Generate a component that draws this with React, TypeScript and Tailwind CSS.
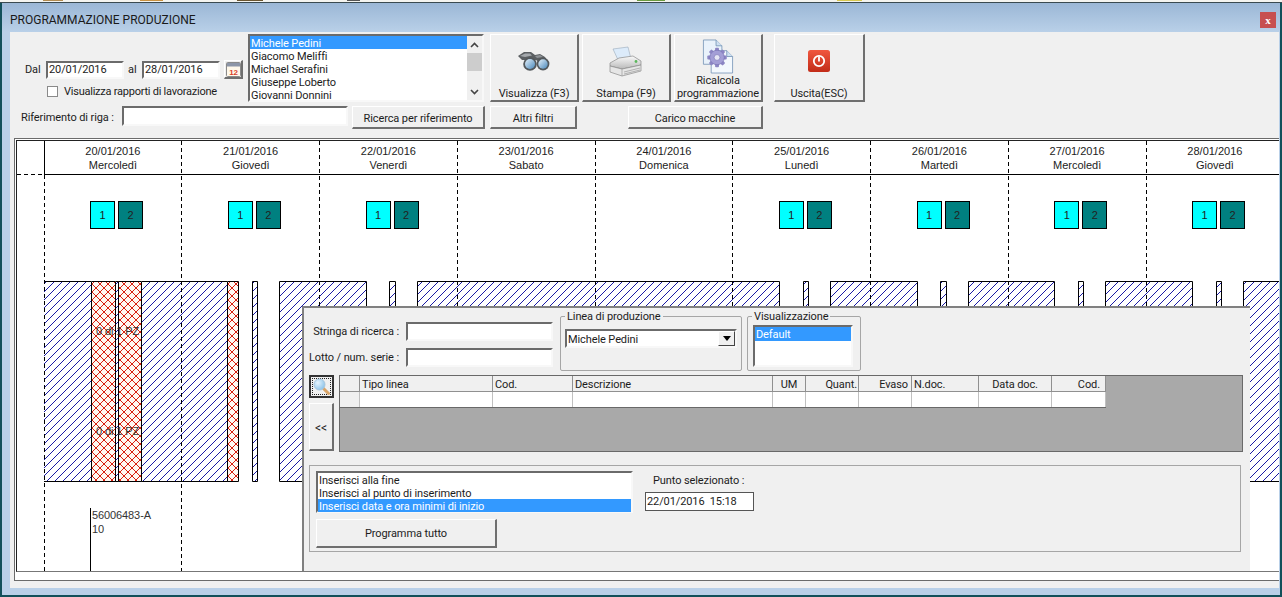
import React from "react";

const ui = "font-['Roboto',sans-serif] text-[11px] leading-[13px] tracking-[-0.1px] text-[#1c1c1c]";
const sunken = "border-2 border-t-[#6b6b6b] border-l-[#6b6b6b] border-r-[#f8f8f8] border-b-[#f8f8f8] bg-white";
const raised = "border border-t-white border-l-white border-r-2 border-b-2 border-r-[#6f6f6f] border-b-[#6f6f6f] bg-[#f0f0f0]";

const days = [
  ["20/01/2016", "Mercoledì", true],
  ["21/01/2016", "Giovedì", true],
  ["22/01/2016", "Venerdì", true],
  ["23/01/2016", "Sabato", false],
  ["24/01/2016", "Domenica", false],
  ["25/01/2016", "Lunedì", true],
  ["26/01/2016", "Martedì", true],
  ["27/01/2016", "Mercoledì", true],
  ["28/01/2016", "Giovedì", true],
] as const;

const gridX = [44, 181, 319, 457, 595, 732, 870, 1008, 1146];
const blocks: [number, number, "h" | "r"][] = [
  [44, 91, "h"], [91, 115, "r"], [115, 118, "h"], [118, 141, "r"], [141, 227, "h"], [227, 238, "r"],
  [252, 257, "h"], [279, 366, "h"], [389, 395, "h"], [417, 779, "h"], [803, 808, "h"], [830, 917, "h"],
  [940, 946, "h"], [968, 1054, "h"], [1078, 1083, "h"], [1105, 1192, "h"], [1216, 1221, "h"], [1243, 1290, "h"],
];

function Chart() {
  return (
    <svg className="absolute left-0 top-0" width={1262} height={431} viewBox="17 141 1262 431">
      <defs>
        <pattern id="hb" patternUnits="userSpaceOnUse" width="8" height="8">
          <rect width="8" height="8" fill="#ffffff" />
          <path d="M-1 9L9 -1" stroke="#00009a" strokeWidth="0.9" fill="none" />
        </pattern>
        <pattern id="hr" patternUnits="userSpaceOnUse" width="8" height="8">
          <rect width="8" height="8" fill="#fff8f2" />
          <path d="M-1 9L9 -1M-1 -1L9 9" stroke="#d8200f" strokeWidth="1" fill="none" />
        </pattern>
      </defs>
      {blocks.map(([a, b, t], i) => (
        <g key={i}>
          <rect x={a} y={281} width={b - a} height={200} fill={t === "h" ? "url(#hb)" : "url(#hr)"} />
          <path
            d={i === 0 ? `M44 281.5H${b}.5V481.5H44` : `M${a}.5 281.5H${b}.5V481.5H${a}.5Z`}
            fill="none"
            stroke="#000"
            strokeWidth="1"
          />
        </g>
      ))}
      {gridX.map((x) => (
        <line key={x} x1={x + 0.5} x2={x + 0.5} y1={x === 44 ? 175 : 141} y2={572} stroke="#000" strokeDasharray="4 3" />
      ))}
      <line x1={44.5} x2={44.5} y1={141} y2={174} stroke="#000" />
      <line x1={17} x2={44} y1={174.5} y2={174.5} stroke="#000" strokeDasharray="4 3" />
      <line x1={44} x2={1279} y1={174.5} y2={174.5} stroke="#000" />
      <line x1={90.5} x2={90.5} y1={508} y2={572} stroke="#000" />
      <g className="font-['Liberation_Sans',sans-serif] text-[11px]" fill="#333">
        <text x={96} y={335}>0 di 1 PZ</text>
        <text x={96} y={435}>0 di 1 PZ</text>
        <text x={92} y={519}>56006483-A</text>
        <text x={92} y={533}>10</text>
      </g>
    </svg>
  );
}

function Binoculars() {
  return (
    <svg width="32" height="19" viewBox="0 0 32 19">
      <defs>
        <linearGradient id="lens" x1="0" y1="0" x2="1" y2="1">
          <stop offset="0" stopColor="#e4f1fb" />
          <stop offset="1" stopColor="#4a88bb" />
        </linearGradient>
      </defs>
      <path d="M0 4L6 0H13L17 3L22 2L27 5L31 11L25 13L18 8H11L4 8Z" fill="#5b5f62" />
      <path d="M2 4L7 1.5H12L14 3.5L7 5Z" fill="#a5a9ad" />
      <path d="M17 4L22 3L25 5L19 6Z" fill="#8f9397" />
      <circle cx="12" cy="12" r="6.8" fill="#53585c" />
      <circle cx="12" cy="12" r="5" fill="url(#lens)" />
      <circle cx="25" cy="12" r="6.4" fill="#53585c" />
      <circle cx="25" cy="12" r="4.7" fill="url(#lens)" />
    </svg>
  );
}

function Printer() {
  return (
    <svg width="34" height="32" viewBox="0 0 34 32">
      <defs>
        <linearGradient id="pb" x1="0" y1="0" x2="0" y2="1">
          <stop offset="0" stopColor="#fafafa" />
          <stop offset="1" stopColor="#b9b9b9" />
        </linearGradient>
      </defs>
      <path d="M4 3L19 1L22 13L10 16Z" fill="#dcebfa" stroke="#9ab" strokeWidth=".6" />
      <path d="M1 17L10 12L24 10L32 15V19L13 23L1 20Z" fill="url(#pb)" stroke="#8a8a8a" strokeWidth=".7" />
      <path d="M1 20L13 23L32 19V25L13 30L1 26Z" fill="#e6e6e6" stroke="#8a8a8a" strokeWidth=".7" />
      <path d="M13 23V30M15 26L31 22M15 28L31 24" stroke="#9a9a9a" strokeWidth=".7" fill="none" />
      <circle cx="27" cy="15.5" r="1.4" fill="#5cb85c" />
    </svg>
  );
}

function GearDoc() {
  const teeth = [0, 45, 90, 135];
  return (
    <svg width="32" height="36" viewBox="0 0 32 36">
      <path d="M1 1H14L20 7V26H1Z" fill="#e9f2fb" stroke="#6f8fb3" strokeWidth=".8" />
      <path d="M14 1V7H20" fill="#cfe0f2" stroke="#6f8fb3" strokeWidth=".8" />
      <path d="M15 12H25L31 18V35H9V20Z" fill="#f3f8fd" stroke="#6f8fb3" strokeWidth=".8" />
      <path d="M25 12V18H31" fill="#cfe0f2" stroke="#6f8fb3" strokeWidth=".8" />
      <g transform="translate(15 19)">
        {teeth.map((r) => (
          <rect key={r} x="-2" y="-10" width="4" height="20" rx="1" fill="#8c86c4" transform={`rotate(${r})`} />
        ))}
        <circle r="7.5" fill="#a39ed6" stroke="#726cb0" strokeWidth=".6" />
        <circle r="3" fill="#e6e6f5" stroke="#726cb0" strokeWidth=".6" />
      </g>
    </svg>
  );
}

function Power() {
  return (
    <svg width="22" height="22" viewBox="0 0 22 22">
      <defs>
        <linearGradient id="pw" x1="0" y1="0" x2="0" y2="1">
          <stop offset="0" stopColor="#f0573f" />
          <stop offset="1" stopColor="#c22c18" />
        </linearGradient>
      </defs>
      <rect width="22" height="22" rx="2.5" fill="url(#pw)" />
      <circle cx="11" cy="11" r="5.2" fill="none" stroke="#fff" strokeWidth="1.8" />
      <path d="M11 6.5V11.5" stroke="#fff" strokeWidth="1.8" />
    </svg>
  );
}

function Calendar() {
  return (
    <svg width="15" height="15" viewBox="0 0 15 15">
      <rect x=".5" y=".5" width="14" height="14" rx="1" fill="#fff8ea" stroke="#8a8a8a" />
      <rect x="1" y="1" width="13" height="3.5" fill="#8d96a8" />
      <text x="7.5" y="12.5" textAnchor="middle" className="font-['Liberation_Sans',sans-serif] text-[8px] font-bold" fill="#d8402a">12</text>
    </svg>
  );
}

function Magnifier() {
  return (
    <svg width="17" height="17" viewBox="0 0 17 17">
      <defs>
        <radialGradient id="mg" cx=".35" cy=".35" r=".8">
          <stop offset="0" stopColor="#e6f4fd" />
          <stop offset="1" stopColor="#7fbce6" />
        </radialGradient>
      </defs>
      <path d="M10 10L15.5 15.5" stroke="#d8a468" strokeWidth="3" strokeLinecap="round" />
      <circle cx="6.5" cy="6.5" r="5.5" fill="url(#mg)" stroke="#a8c6dc" />
    </svg>
  );
}

function Chevron({ up }: { up?: boolean }) {
  return (
    <svg width="9" height="6" viewBox="0 0 9 6">
      <path d={up ? "M1 5L4.5 1.5L8 5" : "M1 1L4.5 4.5L8 1"} fill="none" stroke="#444" strokeWidth="1.6" />
    </svg>
  );
}

function Group({ label, className, children }: { label: string; className: string; children: React.ReactNode }) {
  return (
    <div className={`relative border border-[#a6a6a6] rounded-[2px] h-[55px] mt-[1px] ${className}`}>
      <span className="absolute left-[4px] top-[-7px] bg-[#f0f0f0] px-[2px] whitespace-nowrap">{label}</span>
      {children}
    </div>
  );
}

const cols = [
  ["", ""],
  ["Tipo linea", "pl-[2px]"],
  ["Cod.", "pl-[2px]"],
  ["Descrizione", "pl-[2px]"],
  ["UM", "text-center"],
  ["Quant.", "text-right pr-[1px]"],
  ["Evaso", "text-right pr-[3px]"],
  ["N.doc.", "pl-[2px]"],
  ["Data doc.", "text-center"],
  ["Cod.", "text-right pr-[5px]"],
];

const row = "h-[13px] leading-[15px] pl-[1px]";

export default function App() {
  return (
    <div className={`${ui} relative w-[1282px] h-[597px] overflow-hidden bg-white flex flex-col`}>
      <svg width="1282" height="3" className="block shrink-0">
        <rect width="1282" height="2" fill="#f4f4f0" />
        <rect x="43" width="20" height="1" fill="#b08a50" />
        <rect x="140" width="23" height="1" fill="#c89040" />
        <rect x="237" width="26" height="1" fill="#6a5530" />
        <rect x="347" width="13" height="1" fill="#555" />
        <rect x="637" width="28" height="1" fill="#6a9a40" />
        <rect x="837" width="25" height="1" fill="#d8c850" />
        <rect y="2" width="1282" height="1" fill="#3a4a50" />
      </svg>
      <div className="flex-1 flex flex-col border-l-2 border-r-2 border-b-2 border-[#12505a] bg-[#b9d0e8] min-h-0">
        <div className="h-[29px] shrink-0 flex items-start justify-between pt-[9px] pl-[8px] pr-[4px] bg-gradient-to-b from-[#9bb7d6] to-[#b9d0e8]">
          <span className="text-[12px] leading-[16px] tracking-normal text-[#1a1a1a]">PROGRAMMAZIONE PRODUZIONE</span>
          <div className="w-[16px] h-[16px] bg-[#c75050] flex items-center justify-center text-white font-bold text-[11px] font-['Liberation_Serif',serif]">x</div>
        </div>

        <div className="ml-[8px] w-[1269px] h-[556px] bg-[#f0f0f0] pt-[2px] flex flex-col">
          {/* row 1 */}
          <div className="flex h-[68px]">
            <div className="w-[238px] pt-[26px]">
              <div className="flex items-center h-[19px]">
                <span className="ml-[15px] w-[21px]">Dal</span>
                <div className={`${sunken} w-[78px] h-[18px] flex items-center pl-[1px]`}>20/01/2016</div>
                <span className="ml-[4px] w-[14px]">al</span>
                <div className={`${sunken} w-[78px] h-[18px] flex items-center pl-[1px]`}>28/01/2016</div>
                <div className={`${raised} ml-[4px] w-[19px] h-[19px] flex items-center justify-center`}><Calendar /></div>
              </div>
              <div className="flex items-center mt-[6px] ml-[37px]">
                <div className="w-[11px] h-[11px] border border-[#8a8a8a] bg-white" />
                <span className="ml-[6px] whitespace-nowrap tracking-[-0.24px]">Visualizza rapporti di lavorazione</span>
              </div>
            </div>
            <div className={`${sunken} w-[236px] h-[68px] flex`}>
              <div className="w-[217px]">
                <div className={`${row} bg-[#3399ff] text-white`}>Michele Pedini</div>
                <div className={row}>Giacomo Meliffi</div>
                <div className={row}>Michael Serafini</div>
                <div className={row}>Giuseppe Loberto</div>
                <div className={row}>Giovanni Donnini</div>
              </div>
              <div className="w-[15px] bg-[#f0f0f0] flex flex-col items-center">
                <div className="h-[17px] flex items-center"><Chevron up /></div>
                <div className="w-full h-[18px] bg-[#cdcdcd]" />
                <div className="mt-auto h-[17px] flex items-center"><Chevron /></div>
              </div>
            </div>
            <button className={`${raised} ml-[6px] w-[89px] h-[68px] flex flex-col items-center pt-[17px]`}>
              <Binoculars />
              <span className="mt-auto">Visualizza (F3)</span>
            </button>
            <button className={`${raised} ml-[3px] w-[89px] h-[68px] flex flex-col items-center pt-[11px]`}>
              <Printer />
              <span className="mt-auto">Stampa (F9)</span>
            </button>
            <button className={`${raised} ml-[3px] w-[89px] h-[68px] flex flex-col items-center pt-[4px]`}>
              <GearDoc />
              <span className="mt-auto">Ricalcola<br />programmazione</span>
            </button>
            <button className={`${raised} ml-[11px] w-[91px] h-[68px] flex flex-col items-center pt-[15px]`}>
              <Power />
              <span className="mt-auto">Uscita(ESC)</span>
            </button>
          </div>

          {/* row 2 */}
          <div className="flex mt-[4px] h-[23px]">
            <span className="ml-[11px] w-[101px] h-[20px] pt-[2px] flex items-center whitespace-nowrap">Riferimento di riga :</span>
            <div className={`${sunken} w-[226px] h-[20px]`} />
            <button className={`${raised} ml-[4px] w-[133px] h-[23px] pt-[2px]`}>Ricerca per riferimento</button>
            <button className={`${raised} ml-[5px] w-[87px] h-[23px] pt-[2px]`}>Altri filtri</button>
            <button className={`${raised} ml-[51px] w-[135px] h-[23px] pt-[2px]`}>Carico macchine</button>
          </div>

          {/* chart frame */}
          <div className="mt-[9px] ml-[4px] w-[1265px] h-[443px] bg-white border-l border-t border-b border-[#6b6b6b] pl-[1px] pt-[1px]">
            <div className="relative w-[1263px] h-[432px] border-l border-t border-b border-l-[#222] border-t-[#222] border-b-[#777] overflow-hidden">
              <Chart />
              <div className="relative grid grid-cols-[27px_repeat(9,137.75px)] font-['Liberation_Sans',sans-serif] tracking-normal text-[#222] leading-[14px]">
                <div />
                {days.map(([d, w]) => (
                  <div key={d} className="h-[33px] pt-[3px] text-center">
                    <div>{d}</div>
                    <div>{w}</div>
                  </div>
                ))}
                <div />
                {days.map(([d, , on]) => (
                  <div key={d} className="flex gap-[3px] ml-[46px] mt-[27px] h-[28px] leading-[26px] text-center">
                    {on && <div className="w-[25px] h-[28px] bg-[#00ffff] border border-black">1</div>}
                    {on && <div className="w-[25px] h-[28px] bg-[#008080] border border-black">2</div>}
                  </div>
                ))}
              </div>

              {/* overlay panel */}
              <div className={`${ui} absolute left-[285px] top-[165px] w-[948px] h-[265px] bg-[#f0f0f0] border-l-2 border-t-2 border-[#808080] pl-[5px] flex flex-col`}>
                <div className="flex h-[56px] mt-[7px] ml-[-5px]">
                  <div className="w-[249px] pt-[7px]">
                    <div className="flex items-center justify-end h-[19px]">
                      <span className="mr-[7px] whitespace-nowrap">Stringa di ricerca :</span>
                      <div className={`${sunken} w-[147px] h-[19px]`} />
                    </div>
                    <div className="flex items-center justify-end h-[19px] mt-[7px]">
                      <span className="mr-[7px] whitespace-nowrap">Lotto / num. serie :</span>
                      <div className={`${sunken} w-[147px] h-[19px]`} />
                    </div>
                  </div>
                  <Group label="Linea di produzione" className="ml-[7px] w-[182px]">
                    <div className={`${sunken} absolute left-[4px] top-[12px] w-[172px] h-[19px] flex items-center pl-[1px] pt-[2px]`}>
                      Michele Pedini
                      <div className="absolute right-0 top-0 w-[17px] h-[15px] bg-[#f0f0f0] border border-t-white border-l-white border-r-[#444] border-b-[#444] flex items-center justify-center">
                        <svg width="8" height="5" viewBox="0 0 8 5"><path d="M0 0H8L4 5Z" fill="#000" /></svg>
                      </div>
                    </div>
                  </Group>
                  <Group label="Visualizzazione" className="ml-[5px] w-[114px]">
                    <div className={`${sunken} absolute left-[5px] top-[8px] w-[100px] h-[42px]`}>
                      <div className="h-[14px] leading-[15px] bg-[#3399ff] text-white pl-[1px]">Default</div>
                    </div>
                  </Group>
                </div>

                <div className="flex mt-[4px] gap-[5px] h-[77px]">
                  <div className="w-[25px] flex flex-col gap-[5px]">
                    <div className="h-[23px] bg-[#f0f0f0] border-2 border-[#333] p-[1px]">
                      <div className="w-full h-full border border-dotted border-[#222] flex items-center justify-center">
                        <Magnifier />
                      </div>
                    </div>
                    <button className={`${raised} h-[48px] text-[12px] pt-[3px]`}>&lt;&lt;</button>
                  </div>
                  <div className="w-[904px] bg-[#a9a9a9] border border-[#696969]">
                    <div className="w-[766px] grid grid-cols-[20px_133px_80px_200px_33px_53px_53px_67px_73px_54px] border-r border-b border-[#696969]">
                      {cols.map(([t, c], i) => (
                        <div key={i} className={`h-[16px] bg-[#f0f0f0] border-b border-r border-[#909090] whitespace-nowrap leading-[17px] ${c}`}>{t}</div>
                      ))}
                      {cols.map((_, i) => (
                        <div key={i} className={`h-[15px] border-r border-[#c0c0c0] ${i === 0 ? "bg-[#f0f0f0]" : "bg-white"}`} />
                      ))}
                    </div>
                  </div>
                </div>

                <div className="mt-[13px] w-[932px] h-[87px] border border-[#a6a6a6] flex pl-[6px] pt-[5px]">
                  <div>
                    <div className={`${sunken} w-[317px] h-[42px]`}>
                      <div className={row}>Inserisci alla fine</div>
                      <div className={row}>Inserisci al punto di inserimento</div>
                      <div className={`${row} bg-[#3399ff] text-white`}>Inserisci data e ora minimi di inizio</div>
                    </div>
                    <button className={`${raised} mt-[6px] w-[181px] h-[29px]`}>Programma tutto</button>
                  </div>
                  <div className="ml-[12px] pt-[3px]">
                    <div className="ml-[8px] whitespace-nowrap">Punto selezionato :</div>
                    <div className="mt-[5px] w-[109px] h-[19px] border border-[#555] bg-white flex items-center pl-[1px] whitespace-pre">22/01/2016  15:18</div>
                  </div>
                </div>
              </div>
            </div>
          </div>
        </div>
        <div className="flex-1" />
      </div>
    </div>
  );
}
